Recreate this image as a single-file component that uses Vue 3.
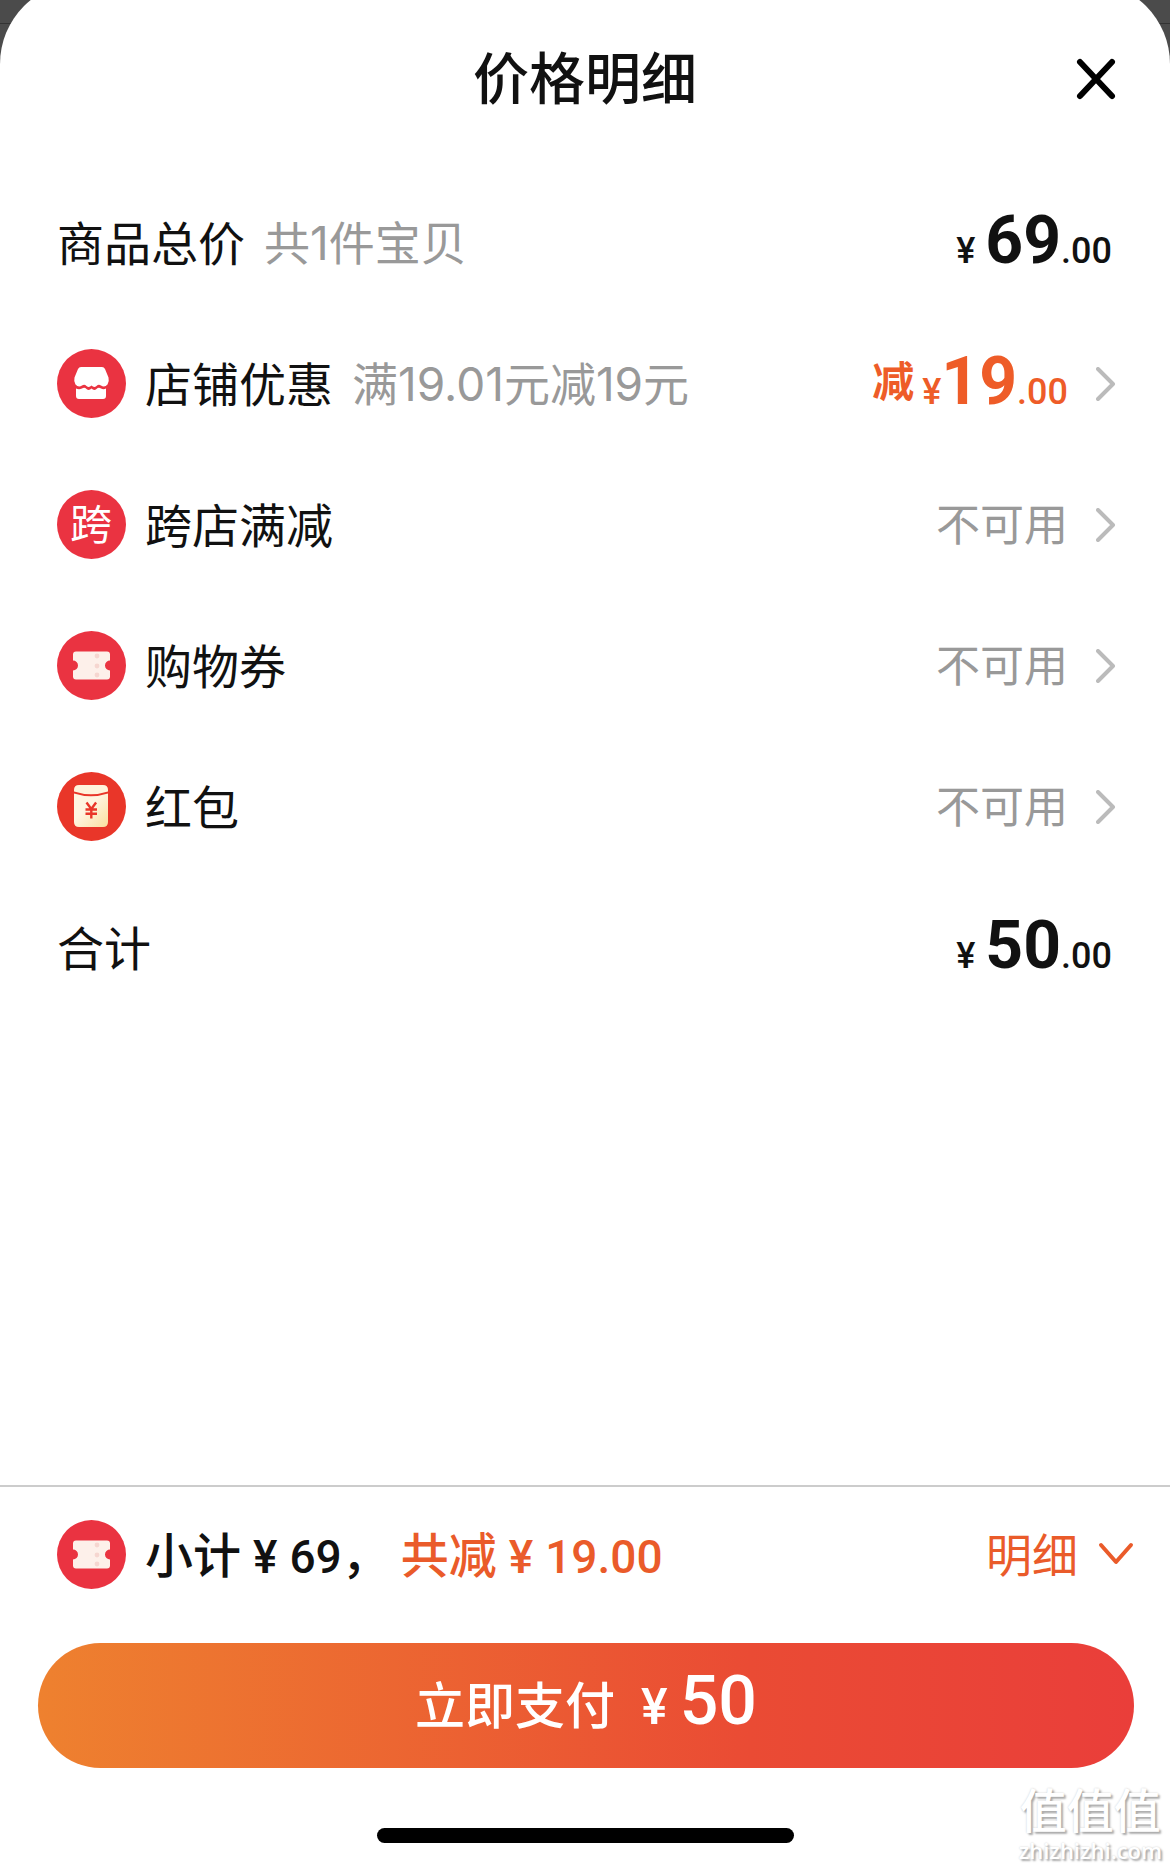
<template>
  <div class="page">
    <section class="sheet">
      <header class="sheet-header">
        <h1 class="title">价格明细</h1>
        <button class="close" type="button" aria-label="关闭">
          <svg width="44" height="44" viewBox="0 0 44 44">
            <path d="M6 5 38 39M38 5 6 39" stroke="#000" stroke-width="6" stroke-linecap="round" />
          </svg>
        </button>
      </header>

      <ul class="rows">
        <li v-for="row in rows" :key="row.label" class="row">
          <svg v-if="row.icon" class="icon" viewBox="0 0 69 69">
            <circle cx="34.5" cy="34.5" r="34.5" :fill="row.icon === 'packet' ? '#e93629' : '#ea3341'" />
            <template v-if="row.icon === 'shop'">
              <path fill="#fff" d="M24 18h21q2 0 3 2l3.500 8.500q1 4-1 7-3 3.500-6.500 1-2.500-1.500-4.500.5-2.500 2-5-.5-2.500 2.500-5 .5-2-2-4.500-.5-3.500 2.500-6.500-1-2-3-1-7L21 20q1-2 3-2z" />
              <path fill="#fff" d="M19 39.500q3 1.500 6 0 2.500-1.500 4.500.5 2.500 2 5-.5 2.500 2.500 5 .5 2-2 4.500-.5 2.500 1.500 5 0V47q0 3-3 3H22q-3 0-3-3z" />
            </template>
            <text v-else-if="row.icon === 'cross'" class="icon-text" x="34" y="50" text-anchor="middle">跨</text>
            <template v-else-if="row.icon === 'coupon'">
              <path fill="#fdf0ea" :d="couponPath" />
              <circle v-for="y in [25, 35, 44]" :key="y" cx="40" :cy="y" r="2.4" fill="#f6d6d0" />
            </template>
            <template v-else>
              <defs>
                <linearGradient id="packet-fill" x1="0" y1="0" x2="1" y2="1">
                  <stop offset="0.4" stop-color="#fff5e1" />
                  <stop offset="1" stop-color="#fadf9f" />
                </linearGradient>
              </defs>
              <path fill="#fff3dc" d="M22 13h24q5 0 5 5v1.500q-17 5.500-34 0V18q0-5 5-5z" />
              <path fill="url(#packet-fill)" d="M17 21.500q17 5.500 34 0V50q0 5-5 5H22q-5 0-5-5z" />
              <path fill="none" stroke="#e93629" stroke-width="2.400" d="M29.500 30.500l4.800 6.500 4.800-6.500M34.300 37V46.500M28.500 37.500h11.500M28.500 41.800h11.500" />
            </template>
          </svg>
          <span class="label">{{ row.label }}</span>
          <span v-if="row.note" class="note">{{ row.note }}</span>
          <span v-if="row.price" class="price" :class="{ off: row.off }">
            <span v-if="row.off" class="minus">减</span>
            <span class="yen">¥</span>
            <span class="whole">{{ row.price }}</span>
            <span class="cents">.00</span>
          </span>
          <span v-else class="none">不可用</span>
          <a v-if="row.icon" class="more" href="#" :aria-label="row.label">
            <svg width="20" height="34" viewBox="0 0 20 34">
              <path d="M2 2 17 17 2 32" fill="none" stroke="#bbb" stroke-width="4" stroke-linecap="round" stroke-linejoin="round" />
            </svg>
          </a>
        </li>
      </ul>

      <footer class="footer">
        <div class="subtotal">
          <svg class="icon" viewBox="0 0 69 69">
            <circle cx="34.5" cy="34.5" r="34.5" fill="#ea3341" />
            <path fill="#fdf0ea" :d="couponPath" />
            <circle v-for="y in [25, 35, 44]" :key="y" cx="40" :cy="y" r="2.4" fill="#f6d6d0" />
          </svg>
          <span class="sum">小计<b class="sum-yen">¥</b><b>69</b>，</span>
          <span class="sum saved">共减<b class="sum-yen">¥</b><b>19.00</b></span>
          <button class="detail" type="button">
            <span class="detail-text">明细</span>
            <svg width="36" height="24" viewBox="0 0 36 24">
              <path d="M3 3 18 20 33 3" fill="none" stroke="#ea5b2a" stroke-width="4" stroke-linecap="round" stroke-linejoin="round" />
            </svg>
          </button>
        </div>
        <button class="pay" type="button">
          立即支付 <span class="pay-yen">¥</span><span class="pay-num">50</span>
        </button>
        <div class="home-bar"></div>
      </footer>
    </section>

    <div class="watermark">
      <span class="mark-name">值值值</span>
      <span class="mark-site">zhizhizhi.com</span>
    </div>
  </div>
</template>

<script setup>
const rows = [
  { label: '商品总价', note: '共1件宝贝', price: '69' },
  { label: '店铺优惠', note: '满19.01元减19元', price: '19', off: true, icon: 'shop' },
  { label: '跨店满减', icon: 'cross' },
  { label: '购物券', icon: 'coupon' },
  { label: '红包', icon: 'packet' },
  { label: '合计', price: '50' },
]

// ticket with a notch on both sides
const couponPath =
  'M19 20.500h31q3 0 3 3v6a5 5 0 0 0 0 10v6q0 3-3 3H19q-3 0-3-3v-6a5 5 0 0 0 0-10v-6q0-3 3-3z'
</script>

<style>
body {
  margin: 0;
  background: #fff;
}
</style>

<style scoped>
.page {
  position: relative;
  display: flex;
  min-height: 100vh;
  overflow: hidden;
  background: linear-gradient(#4b4b4b 23px, #333 23px, #333 24px, #4b4b4b 24px);
  font-family: "Noto Sans CJK SC", sans-serif;
  color: #111;
}

.sheet {
  flex: 1;
  display: flex;
  flex-direction: column;
  margin-top: -18px;
  border-radius: 82px 82px 0 0;
  background: #fff;
}

button {
  padding: 0;
  border: 0;
  background: none;
  font-family: inherit;
  cursor: pointer;
}

svg {
  display: block;
}

.sheet-header {
  display: grid;
  grid-template-columns: 1fr auto 1fr;
  align-items: center;
  height: 190px;
  padding: 0 52px;
}

.title {
  grid-column: 2;
  margin: 0;
  padding-bottom: 4px;
  font-size: 56px;
  font-weight: 500;
  line-height: 80px;
}

.close {
  justify-self: end;
  padding-top: 4px;
}

.rows {
  flex: 1;
  margin: 0;
  padding: 0 54px 0 57px;
  list-style: none;
}

.row {
  display: flex;
  align-items: center;
  height: 141px;
}

.icon {
  flex: none;
  width: 69px;
  height: 69px;
  margin-right: 19px;
}

.icon-text {
  fill: #fff;
  font-size: 42px;
}

.label,
.note,
.none,
.sum,
.detail-text {
  padding-bottom: 5px;
}

.label {
  font-size: 47px;
}

.note,
.none {
  color: #999;
  font-size: 44px;
}

.note {
  margin-left: 19px;
  font-family: Inter, "Noto Sans CJK SC", sans-serif;
  font-size: 46px;
}

.none {
  margin-left: auto;
}

.price {
  display: flex;
  align-items: baseline;
  margin-left: auto;
  padding-bottom: 5px;
  font-family: Roboto, "Noto Sans CJK SC", sans-serif;
  font-weight: 500;
}

.price:last-child {
  margin-right: 4px;
}

.off {
  color: #ee5c28;
}

.minus {
  align-self: center;
  margin-right: 8px;
  padding-top: 4px;
  font-size: 42px;
  font-weight: 700;
  line-height: 60px;
}

.yen {
  margin-right: 10px;
  font-size: 36px;
}

.off .yen {
  margin-right: 0;
}

.whole {
  font-size: 66px;
  font-weight: 700;
}

.cents {
  font-size: 36px;
}

.more {
  margin-left: 28px;
}

.footer {
  border-top: 2px solid #ccc;
}

.subtotal {
  display: flex;
  align-items: center;
  height: 134px;
  padding: 0 36px 0 57px;
}

.sum {
  font-size: 48px;
  font-weight: 500;
}

.sum b {
  font-family: Roboto, sans-serif;
  font-size: 46px;
  font-weight: 500;
}

.sum .sum-yen {
  margin: 0 12px;
}

.saved {
  margin-left: 11px;
  color: #ea5b2a;
}

.detail {
  display: flex;
  align-items: center;
  gap: 20px;
  margin-left: auto;
  color: #ea5b2a;
  font-size: 46px;
}

.pay {
  display: flex;
  align-items: baseline;
  justify-content: center;
  width: calc(100% - 74px);
  height: 125px;
  margin: 22px 36px 60px 38px;
  border-radius: 63px;
  background: linear-gradient(90deg, #ee812f, #ea4b34 65%, #ea3e3a);
  color: #fff;
  font-size: 50px;
  font-weight: 500;
  line-height: 117px;
}

.pay-yen,
.pay-num {
  font-family: Roboto, sans-serif;
}

.pay-yen {
  margin: 0 12px 0 26px;
}

.pay-num {
  font-size: 68px;
}

.home-bar {
  width: 417px;
  height: 15px;
  margin: 0 auto 24px;
  border-radius: 8px;
  background: #000;
}

.watermark {
  position: absolute;
  right: 8px;
  bottom: 5px;
  display: flex;
  flex-direction: column;
  align-items: center;
  gap: 6px;
  color: #fff;
  text-shadow: 2px 2px 2px #aaa, 0 0 2px #ccc;
}

.mark-name {
  font-size: 47px;
  font-weight: 500;
  line-height: 48px;
}

.mark-site {
  font-family: "Open Sans", sans-serif;
  font-size: 22px;
  font-weight: 600;
  line-height: 24px;
}
</style>
